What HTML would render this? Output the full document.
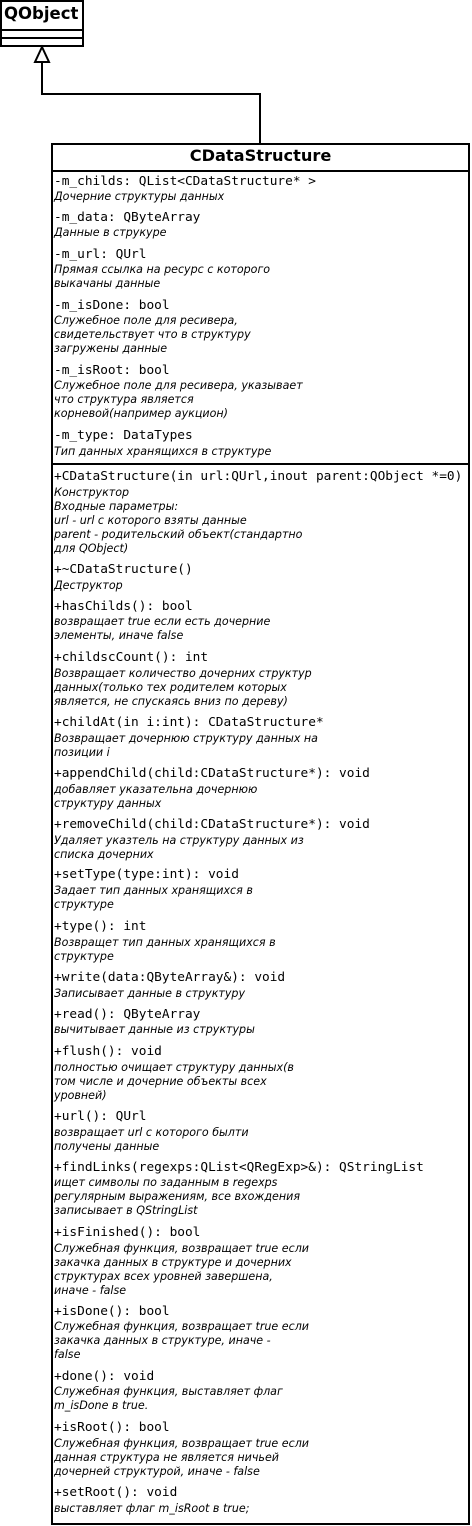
<!DOCTYPE html>
<html><head><meta charset="utf-8"><style>
body{margin:0;width:472px;height:1526px;background:#fff;position:relative;overflow:hidden}
.m,.i{position:absolute;left:54px;white-space:pre;color:#000;transform:translateY(1px)}
.m{font:12.8px/15px "DejaVu Sans Mono","Liberation Mono",monospace}
.i{font:italic 11.1px/14px "DejaVu Sans","Liberation Sans",sans-serif}
.b{position:absolute;background:#000}
</style></head><body>
<div style="position:absolute;left:0;top:0;width:80px;height:43px;border:2px solid #000"></div>
<div class="b" style="left:0;top:29px;width:84px;height:2px"></div>
<div class="b" style="left:0;top:37px;width:84px;height:2px"></div>
<div style="position:absolute;left:4px;top:4px;font:bold 16.5px 'DejaVu Sans',sans-serif">QObject</div>
<svg style="position:absolute;left:0;top:0" width="472" height="150">
<polyline points="42,62 42,94 260,94 260,143" fill="none" stroke="#000" stroke-width="2"/>
<polygon points="42,47 35,62 49,62" fill="#fff" stroke="#000" stroke-width="2"/>
</svg>
<div style="position:absolute;left:51px;top:143px;width:415px;height:1378px;border:2px solid #000"></div>
<div class="b" style="left:51px;top:170px;width:419px;height:2px"></div>
<div class="b" style="left:51px;top:463px;width:419px;height:2px"></div>
<div style="position:absolute;left:51px;width:419px;top:146px;text-align:center;font:bold 16.2px 'DejaVu Sans',sans-serif">CDataStructure</div>
<div class="m" style="top:173px">-m_childs: QList&lt;CDataStructure* &gt;</div>
<div class="i" style="top:189px">Дочерние структуры данных</div>
<div class="m" style="top:209px">-m_data: QByteArray</div>
<div class="i" style="top:225px">Данные в струкуре</div>
<div class="m" style="top:246px">-m_url: QUrl</div>
<div class="i" style="top:262px">Прямая ссылка на ресурс с которого
выкачаны данные</div>
<div class="m" style="top:297px">-m_isDone: bool</div>
<div class="i" style="top:313px">Служебное поле для ресивера,
свидетельствует что в структуру
загружены данные</div>
<div class="m" style="top:362px">-m_isRoot: bool</div>
<div class="i" style="top:378px">Служебное поле для ресивера, указывает
что структура является
корневой(например аукцион)</div>
<div class="m" style="top:427px">-m_type: DataTypes</div>
<div class="i" style="top:444px">Тип данных хранящихся в структуре</div>

<div class="m" style="top:468px">+CDataStructure(in url:QUrl,inout parent:QObject *=0)</div>
<div class="i" style="top:485px">Конструктор
Входные параметры:
url - url с которого взяты данные
parent - родительский объект(стандартно
для QObject)</div>
<div class="m" style="top:561px">+~CDataStructure()</div>
<div class="i" style="top:578px">Деструктор</div>
<div class="m" style="top:598px">+hasChilds(): bool</div>
<div class="i" style="top:614px">возвращает true если есть дочерние
элементы, иначе false</div>
<div class="m" style="top:649px">+childscCount(): int</div>
<div class="i" style="top:666px">Возвращает количество дочерних структур
данных(только тех родителем которых
является, не спускаясь вниз по дереву)</div>
<div class="m" style="top:714px">+childAt(in i:int): CDataStructure*</div>
<div class="i" style="top:731px">Возвращает дочернюю структуру данных на
позиции i</div>
<div class="m" style="top:765px">+appendChild(child:CDataStructure*): void</div>
<div class="i" style="top:782px">добавляет указательна дочернюю
структуру данных</div>
<div class="m" style="top:816px">+removeChild(child:CDataStructure*): void</div>
<div class="i" style="top:833px">Удаляет указтель на структуру данных из
списка дочерних</div>
<div class="m" style="top:866px">+setType(type:int): void</div>
<div class="i" style="top:883px">Задает тип данных хранящихся в
структуре</div>
<div class="m" style="top:918px">+type(): int</div>
<div class="i" style="top:935px">Возвращет тип данных хранящихся в
структуре</div>
<div class="m" style="top:969px">+write(data:QByteArray&amp;): void</div>
<div class="i" style="top:986px">Записывает данные в структуру</div>
<div class="m" style="top:1006px">+read(): QByteArray</div>
<div class="i" style="top:1022px">вычитывает данные из структуры</div>
<div class="m" style="top:1043px">+flush(): void</div>
<div class="i" style="top:1060px">полностью очищает структуру данных(в
том числе и дочерние объекты всех
уровней)</div>
<div class="m" style="top:1108px">+url(): QUrl</div>
<div class="i" style="top:1125px">возвращает url с которого былти
получены данные</div>
<div class="m" style="top:1159px">+findLinks(regexps:QList&lt;QRegExp&gt;&amp;): QStringList</div>
<div class="i" style="top:1175px">ищет символы по заданным в regexps
регулярным выражениям, все вхождения
записывает в QStringList</div>
<div class="m" style="top:1224px">+isFinished(): bool</div>
<div class="i" style="top:1241px">Служебная функция, возвращает true если
закачка данных в структуре и дочерних
структурах всех уровней завершена,
иначе - false</div>
<div class="m" style="top:1303px">+isDone(): bool</div>
<div class="i" style="top:1319px">Служебная функция, возвращает true если
закачка данных в структуре, иначе -
false</div>
<div class="m" style="top:1368px">+done(): void</div>
<div class="i" style="top:1384px">Служебная функция, выставляет флаг
m_isDone в true.</div>
<div class="m" style="top:1419px">+isRoot(): bool</div>
<div class="i" style="top:1436px">Служебная функция, возвращает true если
данная структура не является ничьей
дочерней структурой, иначе - false</div>
<div class="m" style="top:1484px">+setRoot(): void</div>
<div class="i" style="top:1501px">выставляет флаг m_isRoot в true;</div>
</body></html>
